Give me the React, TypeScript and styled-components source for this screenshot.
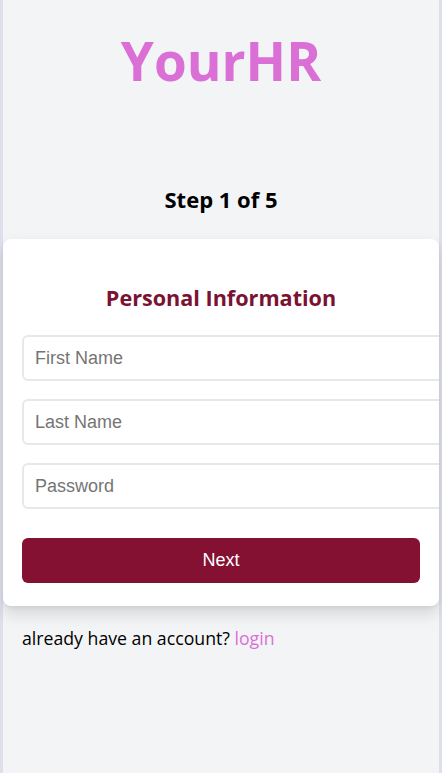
import React from 'react'
import styled, { createGlobalStyle } from 'styled-components'

const GlobalStyle = createGlobalStyle`
  html, body {
    margin: 0;
    padding: 0;
    background: #dde0ec;
  }
  * {
    box-sizing: border-box;
  }
`

const fields = [
  { name: 'firstName', placeholder: 'First Name', type: 'text' },
  { name: 'lastName', placeholder: 'Last Name', type: 'text' },
  { name: 'password', placeholder: 'Password', type: 'password' },
]

const App: React.FC = () => {
  return (
    <>
      <GlobalStyle />
      <Page>
        <Title>YourHR</Title>
        <Step>Step 1 of 5</Step>
        <Card>
          <CardTitle>Personal Information</CardTitle>
          <Form onSubmit={(e) => e.preventDefault()}>
            {fields.map((field) => (
              <Input key={field.name} name={field.name} type={field.type} placeholder={field.placeholder} />
            ))}
            <NextButton type="submit">Next</NextButton>
          </Form>
        </Card>
        <Footer>
          already have an account? <LoginLink href="#">login</LoginLink>
        </Footer>
      </Page>
    </>
  )
}

export default App

const Page = styled.div`
  margin: 0 3px;
  min-height: 100vh;
  background: #f3f4f6;
  padding-top: 29px;
  font-family: 'Segoe UI', 'Open Sans', 'Noto Sans', sans-serif;
`

const Title = styled.h1`
  margin: 0;
  text-align: center;
  font-size: 53px;
  line-height: 64px;
  font-weight: 700;
  color: #da70d6;
`

const Step = styled.h2`
  margin: 92px 0 26px;
  text-align: center;
  font-size: 22px;
  line-height: 28px;
  font-weight: 700;
  color: #000;
`

const Card = styled.div`
  background: #fff;
  border-radius: 8px;
  padding: 44px 19px 23px;
  box-shadow: 0 8px 16px rgba(0, 0, 0, 0.12), 0 2px 4px rgba(0, 0, 0, 0.06);
  overflow: hidden;
`

const CardTitle = styled.h3`
  margin: 0 0 22px;
  text-align: center;
  font-size: 21.6px;
  line-height: 30px;
  font-weight: 700;
  color: #7a1232;
`

const Form = styled.form`
  display: flex;
  flex-direction: column;
  gap: 18px;
`

const Input = styled.input`
  box-sizing: content-box;
  width: 100%;
  height: 22px;
  padding: 10px 11px;
  border: 2px solid #e7e8ea;
  border-radius: 6px;
  font-family: 'Liberation Sans', Arial, sans-serif;
  font-size: 18px;
  color: #222;
  outline: none;

  &::placeholder {
    color: #757575;
  }
`

const NextButton = styled.button`
  margin-top: 11px;
  height: 45px;
  width: 100%;
  border: none;
  border-radius: 6px;
  background: #841032;
  color: #fff;
  font-family: 'Liberation Sans', Arial, sans-serif;
  font-size: 18px;
  cursor: pointer;
`

const Footer = styled.p`
  margin: 19px 0 0;
  padding: 0 19px;
  font-size: 17.7px;
  line-height: 26px;
  color: #000;
`

const LoginLink = styled.a`
  color: #da70d6;
  text-decoration: none;
`
